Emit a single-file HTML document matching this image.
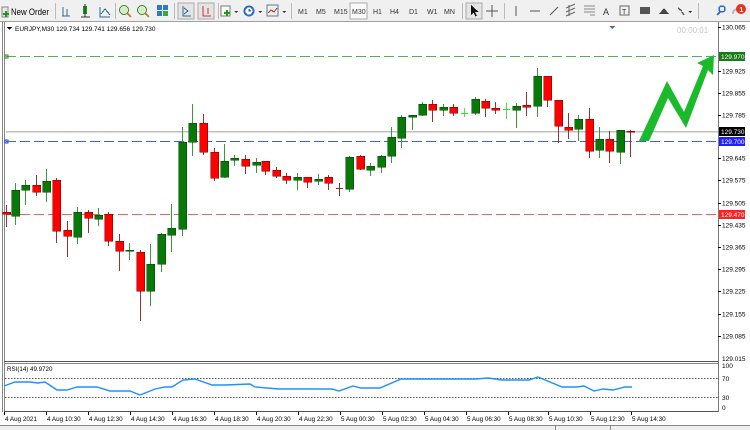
<!DOCTYPE html>
<html><head><meta charset="utf-8"><style>
html,body{margin:0;padding:0;background:#fff;width:750px;height:430px;overflow:hidden}
svg{display:block}
text{font-family:"Liberation Sans",sans-serif}
</style></head><body>
<svg id="s" width="750" height="430" viewBox="0 0 750 430" xmlns="http://www.w3.org/2000/svg" shape-rendering="crispEdges">
<rect x="0" y="0" width="750" height="21" fill="#f0f0f0"/>
<line x1="0" y1="21.5" x2="750" y2="21.5" stroke="#a0a0a0"/>
<g>
<rect x="2" y="7" width="6" height="10" fill="#e8e8e8" stroke="#888" stroke-width="0.6"/>
<path d="M3 14h6M6 11v6" stroke="#1a9a1a" stroke-width="2.2"/>
<text x="11" y="15" font-size="9" fill="#000" textLength="38" lengthAdjust="spacingAndGlyphs">New Order</text>
<line x1="55.5" y1="3" x2="55.5" y2="19" stroke="#bbb"/>
<path d="M63 7v9M67 9v7M62 16h8" stroke="#2a6a9a" stroke-width="1.2" fill="none"/>
<rect x="83" y="6" width="4" height="8" fill="#1a9a1a"/><path d="M85 4v13M81 17h9" stroke="#333" stroke-width="1"/>
<path d="M100 7v10h10M101 14l4-5 5 6" stroke="#2a6a9a" stroke-width="1" fill="none"/>
<line x1="115.5" y1="3" x2="115.5" y2="19" stroke="#bbb"/>
<circle cx="124" cy="10" r="4.5" fill="#d8ecc8" stroke="#3a8a3a"/><path d="M127 13l4 4" stroke="#c08020" stroke-width="2"/>
<circle cx="142" cy="10" r="4.5" fill="#d8ecc8" stroke="#3a8a3a"/><path d="M145 13l4 4" stroke="#c08020" stroke-width="2"/>
<rect x="157" y="5" width="11" height="11" fill="#2a7ac8"/><path d="M157 10.5h11M162.5 5v11" stroke="#fff"/><rect x="163" y="11" width="5" height="5" fill="#3aa83a"/>
<line x1="174.5" y1="3" x2="174.5" y2="19" stroke="#bbb"/>
<rect x="178" y="3" width="16" height="16" fill="#e4e4e4" stroke="#aaa"/>
<path d="M183 6v10h8M184 8l4 3-4 3" stroke="#2a6a9a" fill="none"/>
<rect x="198" y="3" width="16" height="16" fill="#e4e4e4" stroke="#aaa"/>
<path d="M203 6v10h8M208 8v6" stroke="#c03030" fill="none"/>
<line x1="218.5" y1="3" x2="218.5" y2="19" stroke="#bbb"/>
<rect x="221" y="6" width="9" height="10" fill="#fff" stroke="#777"/><path d="M224 13h6M227 10v6" stroke="#1a9a1a" stroke-width="2"/>
<path d="M234 11l2 2 2-2z" fill="#333"/>
<circle cx="249" cy="11" r="5.5" fill="#2a6ac8"/><circle cx="249" cy="11" r="3.5" fill="#fff"/><path d="M249 9v2h2" stroke="#2a6ac8"/>
<path d="M258 11l2 2 2-2z" fill="#333"/>
<rect x="267" y="5" width="11" height="11" fill="#eaf2ea" stroke="#5a7aa0"/><path d="M268 13l3-3 3 2 3-4" stroke="#c03030" fill="none"/>
<path d="M282 11l2 2 2-2z" fill="#333"/>
<line x1="291.5" y1="3" x2="291.5" y2="19" stroke="#bbb"/>
<g font-size="7" fill="#333">
<text x="298" y="14">M1</text><text x="316" y="14">M5</text><text x="334" y="14">M15</text>
<rect x="350" y="3" width="17" height="16" fill="#fafafa" stroke="#aaa"/><text x="352" y="14">M30</text>
<text x="373" y="14">H1</text><text x="390" y="14">H4</text><text x="409" y="14">D1</text><text x="427" y="14">W1</text><text x="444" y="14">MN</text>
</g>
<line x1="462.5" y1="3" x2="462.5" y2="19" stroke="#bbb"/>
<rect x="466" y="3" width="16" height="16" fill="#e4e4e4" stroke="#aaa"/>
<path d="M471 5v10l2.5-2.5 2 4 1.5-.7-2-4h3.5z" fill="#111"/>
<path d="M492 5v12M486 11h12" stroke="#555"/>
<line x1="504.5" y1="3" x2="504.5" y2="19" stroke="#bbb"/>
<path d="M516 6v10" stroke="#555"/><path d="M530 11h10" stroke="#555"/><path d="M550 15l8-8" stroke="#555" shape-rendering="auto"/>
<path d="M566 8l9-4M566 12l9-4M566 16l9-4M569 5v11" stroke="#666" shape-rendering="auto" fill="none"/>
<path d="M584 6h11M584 9h11M584 12h11M590 15h5" stroke="#888"/>
<text x="603" y="15" font-size="9" fill="#333">A</text>
<rect x="620" y="6" width="9" height="9" fill="none" stroke="#666"/><text x="622" y="14" font-size="7" fill="#333">T</text>
<rect x="640" y="7" width="10" height="7" fill="#555"/>
<path d="M659 14l5-6 5 6z" fill="#444"/>
<path d="M678 8l4 3M682 12l2 3" stroke="#555" stroke-width="1.5"/><path d="M688 11l2 2 2-2z" fill="#333"/>
<line x1="698.5" y1="3" x2="698.5" y2="19" stroke="#bbb"/>
<circle cx="722" cy="9" r="3" fill="none" stroke="#2a6ac8" stroke-width="1.5"/><path d="M720 12l-3 3" stroke="#2a6ac8" stroke-width="2"/>
<path d="M733 14a4 4 0 0 1 6-4" stroke="#bbb" stroke-width="2" fill="none"/>
<circle cx="741" cy="9" r="5" fill="#e83020" shape-rendering="auto"/><text x="739.3" y="12" font-size="7.5" fill="#fff" font-weight="bold">1</text>
</g>
<rect x="2" y="22" width="1" height="390" fill="#888"/>
<rect x="4" y="22" width="1" height="390" fill="#888"/>
<line x1="718.5" y1="22" x2="718.5" y2="412" stroke="#7a7a7a"/>
<line x1="4" y1="361.5" x2="718" y2="361.5" stroke="#555"/>
<line x1="4" y1="363.5" x2="718" y2="363.5" stroke="#888"/>
<line x1="4" y1="411.5" x2="718" y2="411.5" stroke="#555"/>
<path d="M7 27h5l-2.5 3z" fill="#000"/>
<text x="15" y="31" font-size="6.5" fill="#000">EURJPY,M30  129.734 129.741 129.656 129.730</text>
<path d="M609 26h6l-3 3z" fill="#4a6aa8"/>
<text x="677" y="33" font-size="8" fill="#c8c8c8">00:00:01</text>
<line x1="6" y1="56.5" x2="718" y2="56.5" stroke="#55b055" stroke-dasharray="10,4"/>
<rect x="5" y="55" width="3" height="3" fill="none" stroke="#2a8a2a" stroke-width="0.8"/>
<line x1="6" y1="131.5" x2="718" y2="131.5" stroke="#c0c0c0" stroke-width="1.5"/>
<line x1="6" y1="141.5" x2="718" y2="141.5" stroke="#4060e0" stroke-dasharray="10,4"/>
<rect x="5" y="140" width="3" height="3" fill="none" stroke="#2040e0" stroke-width="0.8"/>
<line x1="6" y1="214.5" x2="718" y2="214.5" stroke="#f06060" stroke-dasharray="10,4"/>
<g id="candles"></g>
<path d="M639 141 L667 81 L684 112 L703 66 L697 63 L714 55 L713 75 L708 70 L686 128 L668 98 L649 141 Z" fill="#1aba2a" shape-rendering="auto"/>
<g id="axis" font-size="6.5" fill="#000"></g>
<text x="7" y="371" font-size="6.2" fill="#000">RSI(14) 49.9720</text>
<line x1="5" y1="378.5" x2="718" y2="378.5" stroke="#555" stroke-dasharray="1.5,1.5"/>
<line x1="5" y1="397.5" x2="718" y2="397.5" stroke="#555" stroke-dasharray="1.5,1.5"/>
<polyline shape-rendering="auto" fill="none" stroke="#1e90ff" stroke-width="1.4" points="4,386 15,382 30,382 38,383 45,382 57,390 67,390 77,387 97,387 110,391 130,391 140,395 155,389 165,387 172,387 183,380 195,379 212,385 225,385 250,384 255,387 279,389 332,389 339,391 353,386 361,388 380,388 401,379 452,379 476,379 488,378 502,380 529,380 538,377 562,387 577,387 584,386 594,391 603,389 613,390 625,387 632,387"/>
<g font-size="6.5" fill="#000">
<text x="722" y="368">100</text><text x="722" y="381">70</text><text x="722" y="400">30</text><text x="722" y="410">0</text>
<text x="722" y="361">129.015</text>
</g>
<g id="time" font-size="6.3" fill="#000"></g>
<rect x="0" y="425" width="750" height="5" fill="#f0f0f0"/>
<line x1="0" y1="425.5" x2="750" y2="425.5" stroke="#888"/>
<line x1="555.5" y1="425" x2="555.5" y2="430" stroke="#888"/>
<line x1="610.5" y1="425" x2="610.5" y2="430" stroke="#888"/>
</svg>
<script>
var C=[[6,'r',212,214,205,227],[15,'g',190,216,183,225],[25,'g',185,190,180,205],[36,'r',185,192,175,196],[46,'g',181,192,169,202],[56,'r',180,231,178,243],[67,'r',230,236,221,257],[77,'g',212,237,207,244],[88,'r',212,218,210,233],[98,'g',215,219,208,226],[108,'r',214,241,212,246],[119,'r',241,251,234,271],[129,'g',250,251,243,260],[140,'r',252,291,250,321],[150,'g',264,291,244,306],[161,'g',234,264,233,272],[171,'g',228,235,204,252],[182,'g',142,229,127,236],[192,'g',123,142,104,156],[203,'r',123,152,114,155],[214,'r',152,178,148,181],[224,'g',161,177,144,178],[234,'g',158,160,155,166],[245,'r',159,166,155,174],[256,'g',162,165,158,173],[265,'r',161,171,161,175],[276,'r',170,176,167,178],[286,'r',176,180,173,184],[297,'g',177,180,173,190],[307,'r',177,182,177,188],[318,'g',179,181,174,185],[328,'r',177,183,175,190],[339,'d',188,188,183,196],[349,'g',157,189,156,192],[360,'r',156,169,155,170],[370,'g',166,170,163,176],[381,'g',156,167,155,173],[391,'g',137,156,127,163],[401,'g',117,138,115,148],[412,'g',115,117,115,130],[422,'g',104,115,102,116],[432,'r',104,110,100,122],[443,'g',107,110,104,116],[453,'r',107,113,104,116],[464,'l',113,113,108,117],[475,'g',99,113,97,115],[485,'r',101,108,99,117],[495,'r',108,110,102,114],[506,'l',109,109,103,119],[516,'g',106,110,103,128],[526,'r',105,107,92,116],[537,'g',76,106,68,117],[547,'r',76,100,76,107],[558,'r',100,126,100,143],[568,'r',127,130,113,139],[578,'g',119,129,115,141],[589,'r',119,151,108,158],[599,'g',139,150,127,158],[609,'r',139,151,131,163],[620,'g',130,152,130,164],[630,'r',131,132,130,157]];
var h='';C.forEach(function(c){var x=c[0],t=c[1];var body=t=='g'?'#087808':t=='r'?'#ff0000':t=='l'?'#30e030':'#8a3030';var wick=t=='g'?'#3a9a3a':t=='r'?'#9a3030':t=='l'?'#50e050':'#8a3030';
h+='<line x1="'+(x+0.5)+'" y1="'+c[4]+'" x2="'+(x+0.5)+'" y2="'+c[5]+'" stroke="'+wick+'"/>';
var hgt=Math.max(c[3]-c[2],1);
if(t=='d'||t=='l'){h+='<rect x="'+(x-3)+'" y="'+c[2]+'" width="7" height="1" fill="'+body+'"/>';}
else h+='<rect x="'+(x-3.5)+'" y="'+c[2]+'" width="8" height="'+hgt+'" fill="'+body+'" stroke="'+(t=='g'?'#064006':'#700')+'" stroke-width="0.5"/>';});
document.getElementById('candles').innerHTML=h;
var A=[[27,'130.065'],[71,'129.925'],[93,'129.855'],[115,'129.785'],[158,'129.645'],[180,'129.575'],[203,'129.505'],[225,'129.435'],[247,'129.365'],[269,'129.295'],[291,'129.225'],[314,'129.155'],[336,'129.085']];
var a='';A.forEach(function(p){a+='<line x1="718" y1="'+(p[0]+.5)+'" x2="721" y2="'+(p[0]+.5)+'" stroke="#000"/><text x="722" y="'+(p[0]+2.5)+'">'+p[1]+'</text>';});
function lab(y,t,bg,fg){return '<rect x="719" y="'+(y-4)+'" width="26" height="9" fill="'+bg+'"/><text x="721" y="'+(y+3)+'" fill="'+fg+'">'+t+'</text>';}
a+=lab(56,'129.970','#1a7a1a','#fff')+lab(131,'129.730','#000','#fff')+lab(141,'129.700','#2020ff','#fff')+lab(214,'129.470','#ff2020','#fff');
document.getElementById('axis').innerHTML=a;
var T=[[4,'4 Aug 2021'],[46,'4 Aug 10:30'],[88,'4 Aug 12:30'],[130,'4 Aug 14:30'],[172,'4 Aug 16:30'],[214,'4 Aug 18:30'],[256,'4 Aug 20:30'],[298,'4 Aug 22:30'],[340,'5 Aug 00:30'],[382,'5 Aug 02:30'],[424,'5 Aug 04:30'],[466,'5 Aug 06:30'],[508,'5 Aug 08:30'],[548,'5 Aug 10:30'],[590,'5 Aug 12:30'],[631,'5 Aug 14:30']];
var t='';T.forEach(function(p){t+='<line x1="'+(p[0]+.5)+'" y1="412" x2="'+(p[0]+.5)+'" y2="415" stroke="#000"/><text x="'+(p[0]+1)+'" y="421">'+p[1]+'</text>';});
document.getElementById('time').innerHTML=t;
</script>
</body></html>
